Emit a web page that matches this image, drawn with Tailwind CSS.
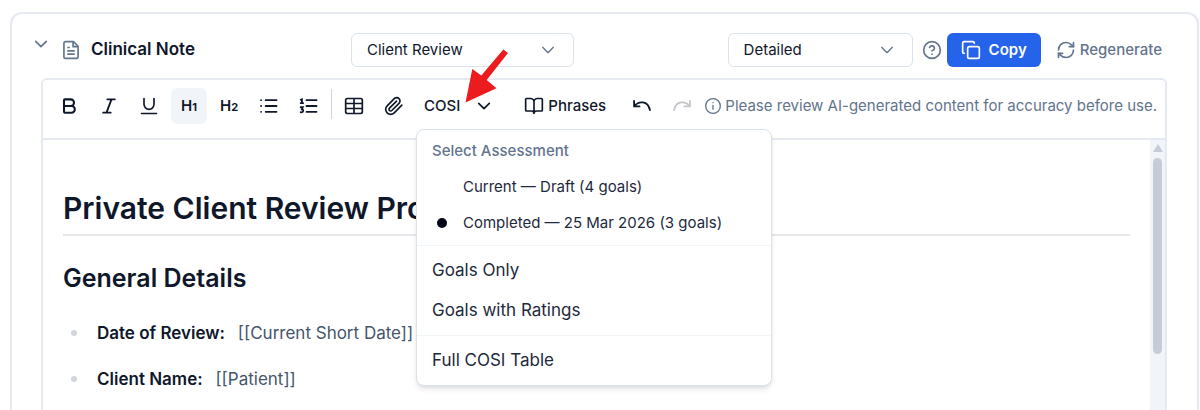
<!DOCTYPE html>
<html lang="en">
<head>
  <meta charset="UTF-8">
  <meta name="viewport" content="width=device-width, initial-scale=1.0">
  <title>Clinical Note</title>
  <script src="https://cdn.jsdelivr.net/npm/@tailwindcss/browser@4"></script>
</head>
<body class="bg-white font-['Inter',sans-serif] text-slate-900">
  <main class="h-screen overflow-hidden pt-3 pl-[10px] pr-px">
    <section class="flex h-full flex-col rounded-t-xl border-2 border-b-0 border-[#e5eaf2] pr-[30px] pl-[29px]">

      <!-- Note header -->
      <header class="flex h-16 shrink-0 items-center pt-2">
        <button type="button" aria-label="Collapse note" class="-ml-2 mb-3 text-slate-500">
          <svg class="size-4" viewBox="0 0 24 24" fill="none" stroke="currentColor" stroke-width="2.5" stroke-linecap="round" stroke-linejoin="round"><path d="m4 8 8 8 8-8"/></svg>
        </button>
        <svg class="ml-3 size-5 text-slate-500" viewBox="0 0 24 24" fill="none" stroke="currentColor" stroke-width="2" stroke-linejoin="round"><path d="M15 2H5.500a2 2 0 0 0-2 2v16a2 2 0 0 0 2 2h13a2 2 0 0 0 2-2V7.500z"/><path d="M14.500 2v6h6M7.500 9h3M7.500 13h9M7.500 17h9"/></svg>
        <h2 class="ml-[10px] w-[260px] text-[17px] font-semibold">Clinical Note</h2>

        <div class="relative w-[223px]">
          <select aria-label="Note template" class="h-[34px] w-full appearance-none rounded-md border border-[#dae2ec] bg-white pl-[15px] text-[15px]">
            <option>Client Review</option>
          </select>
          <svg class="pointer-events-none absolute top-[9px] right-[18px] size-4 text-slate-500" viewBox="0 0 24 24" fill="none" stroke="currentColor" stroke-width="2" stroke-linecap="round" stroke-linejoin="round"><path d="m4 8 8 8 8-8"/></svg>
        </div>

        <div class="relative ml-auto w-[185px]">
          <select aria-label="Detail level" class="h-[34px] w-full appearance-none rounded-md border border-[#dae2ec] bg-white pl-[15px] text-[15px]">
            <option>Detailed</option>
          </select>
          <svg class="pointer-events-none absolute top-[9px] right-[18px] size-4 text-slate-500" viewBox="0 0 24 24" fill="none" stroke="currentColor" stroke-width="2" stroke-linecap="round" stroke-linejoin="round"><path d="m4 8 8 8 8-8"/></svg>
        </div>
        <button type="button" aria-label="Help" class="ml-[9px] text-slate-500">
          <svg class="size-5" viewBox="0 0 24 24" fill="none" stroke="currentColor" stroke-width="2" stroke-linecap="round" stroke-linejoin="round"><circle cx="12" cy="12" r="10"/><path d="M9.090 9a3 3 0 0 1 5.830 1c0 2-3 3-3 3M12 17h.01"/></svg>
        </button>
        <button type="button" class="ml-[5px] flex h-[34px] items-center gap-2 rounded-md bg-[#2563eb] px-[14px] text-[15px] font-semibold text-white">
          <svg class="size-5" viewBox="0 0 24 24" fill="none" stroke="currentColor" stroke-width="2" stroke-linecap="round" stroke-linejoin="round"><rect x="8" y="8" width="14" height="14" rx="2"/><path d="M4 16c-1.100 0-2-.9-2-2V4c0-1.100.9-2 2-2h10c1.100 0 2 .9 2 2"/></svg>
          Copy
        </button>
        <button type="button" class="ml-[15px] mr-[5px] flex items-center gap-1 text-[15px] font-medium text-slate-500">
          <svg class="size-5" viewBox="0 0 24 24" fill="none" stroke="currentColor" stroke-width="2" stroke-linecap="round" stroke-linejoin="round"><path d="M3 12a9 9 0 0 1 9-9 9.750 9.750 0 0 1 6.740 2.740L21 8"/><path d="M21 3v5h-5M21 12a9 9 0 0 1-9 9 9.750 9.750 0 0 1-6.740-2.740L3 16"/><path d="M8 16H3v5"/></svg>
          Regenerate
        </button>
      </header>

      <div class="flex min-h-0 flex-1 flex-col rounded-t-md border-2 border-b-0 border-[#e5eaf2]">

        <!-- Formatting toolbar -->
        <div role="toolbar" aria-label="Formatting" class="flex h-[60px] shrink-0 items-center gap-1 border-b-2 border-[#e5eaf2] pr-2 pb-[6px] pl-2">
          <button type="button" aria-label="Bold" class="grid size-9 shrink-0 place-items-center rounded-md">
            <svg class="size-5" viewBox="0 0 24 24" fill="none" stroke="currentColor" stroke-width="2.500" stroke-linecap="round" stroke-linejoin="round"><path d="M6 12h9a4 4 0 0 1 0 8H7a1 1 0 0 1-1-1V5a1 1 0 0 1 1-1h7a4 4 0 0 1 0 8"/></svg>
          </button>
          <button type="button" aria-label="Italic" class="grid size-9 shrink-0 place-items-center rounded-md">
            <svg class="size-5" viewBox="0 0 24 24" fill="none" stroke="currentColor" stroke-width="2.200" stroke-linecap="round"><path d="M19 4h-9M14 20H5M15 4 9 20"/></svg>
          </button>
          <button type="button" aria-label="Underline" class="grid size-9 shrink-0 place-items-center rounded-md">
            <svg class="size-5" viewBox="0 0 24 24" fill="none" stroke="currentColor" stroke-width="2" stroke-linecap="round"><path d="M6 3v7a6 6 0 0 0 12 0V3M3 21h18"/></svg>
          </button>
          <button type="button" aria-label="Heading 1" aria-pressed="true" class="size-9 shrink-0 rounded-md bg-slate-100 text-[15px] font-semibold">H<span class="text-[11px] font-bold">1</span></button>
          <button type="button" aria-label="Heading 2" class="size-9 shrink-0 rounded-md text-[15px] font-semibold">H<span class="text-[11px] font-bold">2</span></button>
          <button type="button" aria-label="Bullet list" class="grid size-9 shrink-0 place-items-center rounded-md">
            <svg class="size-5" viewBox="0 0 24 24" fill="none" stroke="currentColor" stroke-width="2.200" stroke-linecap="round"><path d="M8 5h13M8 12h13M8 19h13M2.500 5h.01M2.500 12h.01M2.500 19h.01"/></svg>
          </button>
          <button type="button" aria-label="Numbered list" class="grid size-9 shrink-0 place-items-center rounded-md">
            <svg class="size-5" viewBox="0 0 24 24" fill="none" stroke="currentColor" stroke-width="2.200" stroke-linecap="round"><path d="M9 5h12M9 12h12M9 19h12"/><path d="M2 4.500 3.500 4v4.500M2 8.500h3M2 13.500h2.500l-1 2.500c2.500 0 2 4-1.500 3.500"/></svg>
          </button>
          <span class="mb-1 h-[30px] w-px shrink-0 bg-slate-300"></span>
          <button type="button" aria-label="Insert table" class="grid size-9 shrink-0 place-items-center rounded-md">
            <svg class="size-5" viewBox="0 0 24 24" fill="none" stroke="currentColor" stroke-width="2"><rect x="2" y="3" width="20" height="18" rx="2"/><path d="M12 3v18M2 9h20M2 15h20"/></svg>
          </button>
          <button type="button" aria-label="Attach file" class="grid size-9 shrink-0 place-items-center rounded-md">
            <svg class="size-5" viewBox="0 0 24 24" fill="none" stroke="currentColor" stroke-width="2" stroke-linecap="round" stroke-linejoin="round"><path d="m21.440 11.050-9.190 9.190a6 6 0 0 1-8.490-8.490l8.570-8.570A4 4 0 1 1 18 8.840l-8.590 8.570a2 2 0 0 1-2.830-2.830l8.490-8.480"/></svg>
          </button>

          <div class="relative shrink-0">
            <button type="button" aria-haspopup="menu" aria-expanded="true" class="flex h-9 items-center gap-4 px-2 text-[15px] font-medium">
              COSI
              <svg class="size-4" viewBox="0 0 24 24" fill="none" stroke="currentColor" stroke-width="2.500" stroke-linecap="round" stroke-linejoin="round"><path d="m4 8 8 8 8-8"/></svg>
            </button>

            <!-- Pointer to the COSI menu -->
            <svg class="pointer-events-none absolute -top-10 left-12 z-20 h-14 w-12" viewBox="464 48 48 56" fill="#ea1c1e"><path d="M465.500 102.500 472.300 69l9 6.500L503.300 49.500l4.700 3.500L486.700 80l9.800 8.300z"/></svg>

            <!-- Assessment menu -->
            <div role="menu" aria-label="COSI" class="absolute top-[41px] left-0 z-10 w-[356px] rounded-lg border border-[#dae2ec] bg-white text-slate-800 shadow-md">
              <fieldset class="border-b border-slate-100 py-1 text-[15px]">
                <legend class="float-left flex h-[35px] w-full items-center px-[15px] font-medium text-slate-500">Select Assessment</legend>
                <label class="clear-both flex h-9 items-center gap-4 px-5">
                  <input type="radio" name="assessment" class="size-[10px] appearance-none rounded-full checked:bg-slate-950">
                  Current — Draft (4 goals)
                </label>
                <label class="flex h-9 items-center gap-4 px-5">
                  <input type="radio" name="assessment" checked class="size-[10px] appearance-none rounded-full checked:bg-slate-950">
                  Completed — 25 Mar 2026 (3 goals)
                </label>
              </fieldset>
              <div class="border-b border-slate-100 pt-[5px] pb-1 text-[17px]">
                <button type="button" role="menuitem" class="block h-10 w-full px-[15px] text-left">Goals Only</button>
                <button type="button" role="menuitem" class="block h-10 w-full px-[15px] text-left">Goals with Ratings</button>
              </div>
              <div class="pt-[5px] pb-1 text-[17px]">
                <button type="button" role="menuitem" class="block h-10 w-full px-[15px] text-left">Full COSI Table</button>
              </div>
            </div>
          </div>

          <button type="button" class="ml-4 flex h-9 shrink-0 items-center gap-1 px-1 text-[15px] font-medium">
            <svg class="size-5" viewBox="0 0 24 24" fill="none" stroke="currentColor" stroke-width="2" stroke-linecap="round" stroke-linejoin="round"><path d="M12 7v14M3 18a1 1 0 0 1-1-1V4a1 1 0 0 1 1-1h5a4 4 0 0 1 4 4 4 4 0 0 1 4-4h5a1 1 0 0 1 1 1v13a1 1 0 0 1-1 1h-6a3 3 0 0 0-3 3 3 3 0 0 0-3-3z"/></svg>
            Phrases
          </button>
          <button type="button" aria-label="Undo" class="ml-[10px] grid size-9 shrink-0 place-items-center rounded-md">
            <svg class="size-5" viewBox="0 0 24 24" fill="none" stroke="currentColor" stroke-width="2.200" stroke-linecap="round" stroke-linejoin="round"><path d="M2.500 6v6.500H9M3 12C8 6 19 5 21.500 17"/></svg>
          </button>
          <button type="button" aria-label="Redo" disabled class="grid size-9 shrink-0 place-items-center rounded-md text-[#c3c6cb]">
            <svg class="size-5" viewBox="0 0 24 24" fill="none" stroke="currentColor" stroke-width="2.200" stroke-linecap="round" stroke-linejoin="round"><path d="M21.500 6v6.500H15M21 12C16 6 5 5 2.500 17"/></svg>
          </button>
          <p class="ml-auto flex items-center gap-1 text-[15px] whitespace-nowrap text-slate-500">
            <svg class="size-4" viewBox="0 0 24 24" fill="none" stroke="currentColor" stroke-width="2" stroke-linecap="round"><circle cx="12" cy="12" r="11"/><path d="M12 17v-6M12 7h.01"/></svg>
            Please review AI-generated content for accuracy before use.
          </p>
        </div>

        <!-- Note body -->
        <div class="flex min-h-0 flex-1">
          <article class="min-w-0 flex-1 overflow-hidden pt-12 pr-5 pl-5">
            <h1 class="border-b-2 border-[#e5e7eb] pb-[6px] text-[30px] leading-10 font-semibold">Private Client Review Progress</h1>
            <h2 class="mt-6 text-[25px] leading-9 font-semibold">General Details</h2>
            <ul class="mt-6 ml-2 flex flex-col gap-5 text-[17px] leading-[26px] text-slate-600">
              <li class="flex items-center gap-5"><span class="size-[6px] rounded-full bg-gray-300"></span><span><strong class="mr-2 font-semibold text-slate-900">Date of Review:</strong> [[Current Short Date]]</span></li>
              <li class="flex items-center gap-5"><span class="size-[6px] rounded-full bg-gray-300"></span><span><strong class="mr-2 font-semibold text-slate-900">Client Name:</strong> [[Patient]]</span></li>
            </ul>
          </article>
          <div aria-hidden="true" class="flex w-[15px] flex-col items-center bg-slate-100 pt-1">
            <svg class="h-2 w-[10px] text-[#c5ccd8]" viewBox="0 0 10 8" fill="currentColor"><path d="m5 0 5 8H0z"/></svg>
            <span class="mt-[6px] h-[196px] w-[9px] rounded-full bg-[#c5ccd8]"></span>
          </div>
        </div>
      </div>
    </section>
  </main>
</body>
</html>
